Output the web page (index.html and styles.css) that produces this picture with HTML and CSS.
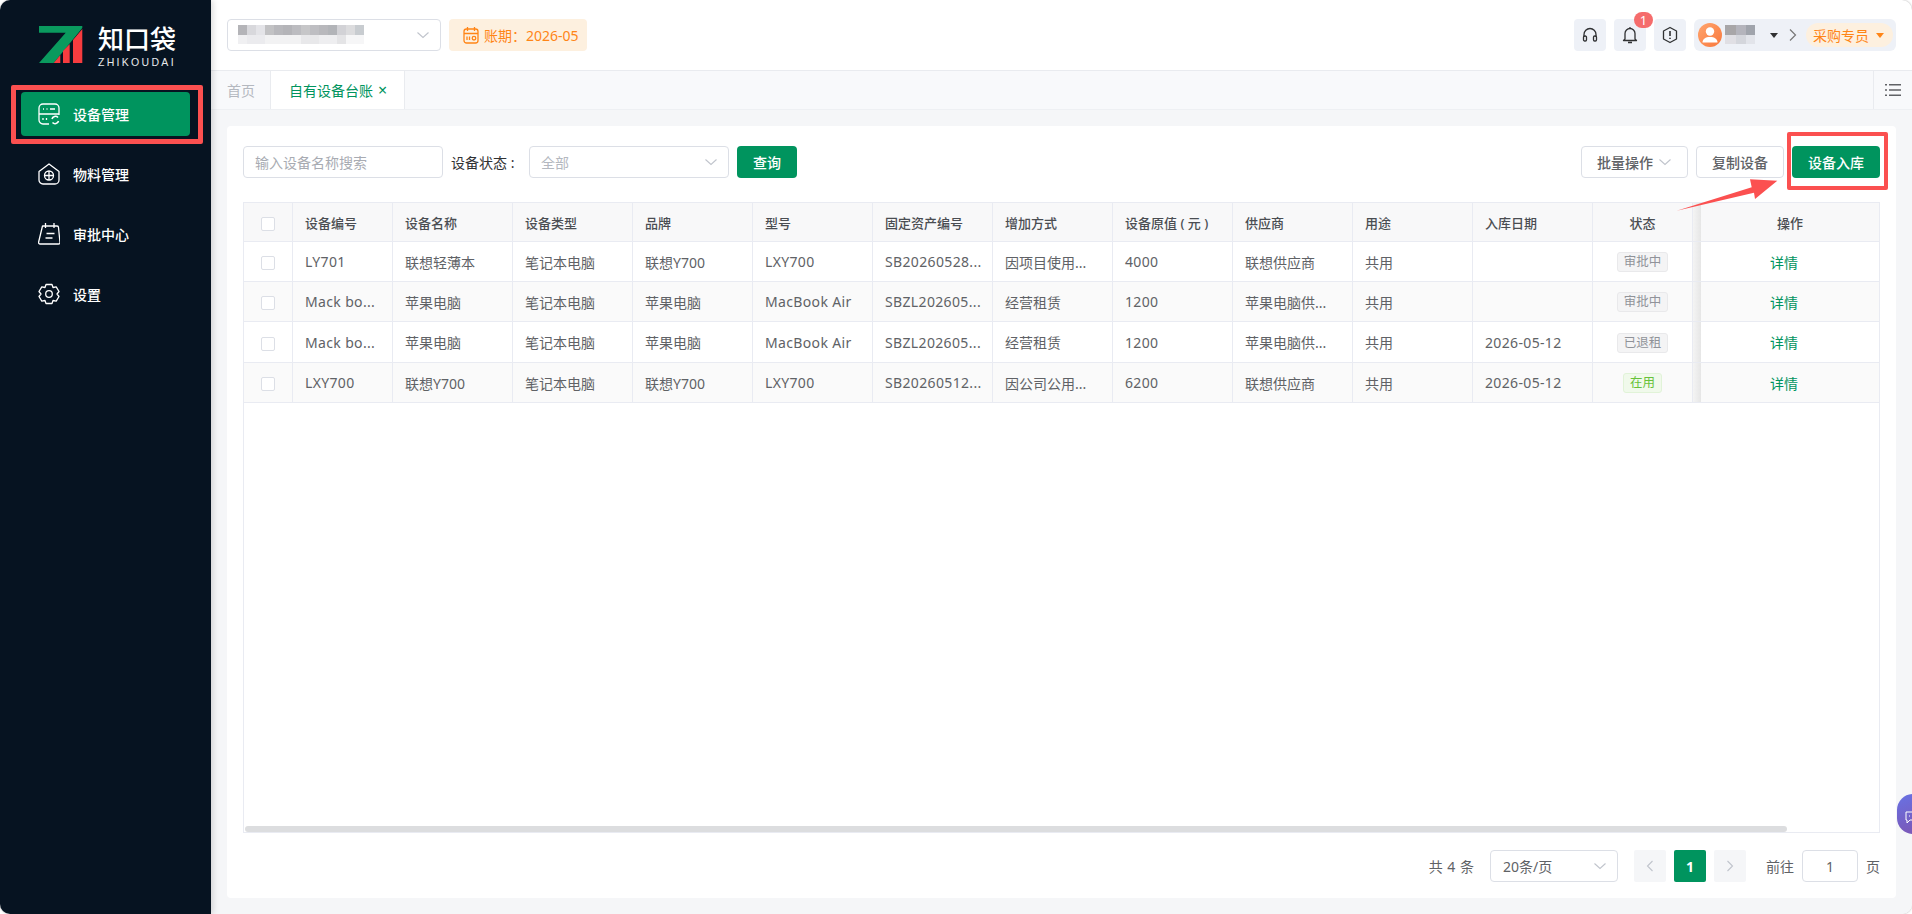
FILE: index.html
```html
<!DOCTYPE html>
<html lang="zh-CN">
<head>
    <meta charset="UTF-8">
    <title>自有设备台账</title>
    <link rel="stylesheet" href="styles.css">
</head>
<body>
<svg class="defs" width="0" height="0">
    <symbol id="chev" viewBox="0 0 14 14"><path d="M1.5 4.5 7 9.5l5.5-5" fill="none" stroke="currentColor" stroke-width="1.1"/></symbol>
</svg>
<div class="app">
    <aside class="sidebar">
        <div class="logo">
            <svg class="logo-mark" viewBox="0 0 44 38">
                <path d="M0 0H43.300V2L14.700 37H0L26.700 6.700H0z" fill="#0a9a5e"/>
                <path d="M14.700 37 21.300 29V37zM24 37V25L30.700 18V37zM34 37V14L43.300 3V37z" fill="#f63c3f"/>
            </svg>
            <div class="logo-text">
                <div class="logo-cn">知口袋</div>
                <div class="logo-en">ZHIKOUDAI</div>
            </div>
        </div>
        <nav class="menu">
            <a class="menu-item active">
                <svg class="menu-icon" viewBox="0 0 22 22" fill="none" stroke="#fff" stroke-width="1.3">
                    <path d="M11 21H5a4 4 0 0 1-4-4V5a4 4 0 0 1 4-4h12a4 4 0 0 1 4 4v7"/>
                    <path d="M1 11h20M5 6h1M8.500 6h1M12 6h5M5 15v2M8.500 15v2"/>
                    <path d="M14 16a3.500 3.500 0 0 1 6-1.500M20.500 18a3.500 3.500 0 0 1-6 1.500" stroke-width="1.600"/>
                </svg>
                <span>设备管理</span>
            </a>
            <a class="menu-item">
                <svg class="menu-icon" viewBox="0 0 22 22" fill="none" stroke="#fff" stroke-width="1.300">
                    <path d="M1 8.500 11 1l10 7.500V17a4 4 0 0 1-4 4H5a4 4 0 0 1-4-4z" stroke-linejoin="round"/>
                    <circle cx="11" cy="12.500" r="4.500"/>
                    <path d="M6.500 12.500h9M11 8v9"/>
                </svg>
                <span>物料管理</span>
            </a>
            <a class="menu-item">
                <svg class="menu-icon" viewBox="0 0 22 22" fill="none" stroke="#fff" stroke-width="1.300">
                    <path d="M4.500 3H19a1.500 1.500 0 0 1 1.500 1.500L22 19.500A1.500 1.500 0 0 1 20.500 21H2a1.500 1.500 0 0 1-1.500-1.500z" stroke-linejoin="round"/>
                    <path d="M7.500 0v5M16 0v5M8.500 10.500h8M7.500 15h7"/>
                </svg>
                <span>审批中心</span>
            </a>
            <a class="menu-item">
                <svg class="menu-icon" viewBox="0 0 22 22" fill="none" stroke="#fff" stroke-width="1.300">
                    <path d="M8 1.500h6l1 3 3.200-.7L21 8.500 19 11l2 2.500-2.800 4.700-3.200-.7-1 3H8l-1-3-3.200.7L1 13.500 3 11 1 8.500l2.800-4.700 3.200.7z" stroke-linejoin="round"/>
                    <circle cx="11" cy="11" r="3.300"/>
                </svg>
                <span>设置</span>
            </a>
        </nav>
    </aside>

    <main class="main">
        <header class="topbar">
            <div class="org-select">
                <svg class="mosaic" width="128" height="20" viewBox="0 0 128 20">
                    <g>
                        <rect width="9" height="10" fill="#b4b4b8"/><rect x="9" width="9" height="10" fill="#d8d8dc"/><rect x="18" width="9" height="10" fill="#e4e4e8"/>
                        <rect x="27" width="9" height="10" fill="#c2c2c4"/><rect x="36" width="9" height="10" fill="#b8b8bc"/><rect x="45" width="9" height="10" fill="#b4b4b8"/>
                        <rect x="54" width="9" height="10" fill="#bcbcc0"/><rect x="63" width="9" height="10" fill="#c6c6c8"/><rect x="72" width="9" height="10" fill="#bebec2"/>
                        <rect x="81" width="9" height="10" fill="#b8b8bc"/><rect x="90" width="9" height="10" fill="#b2b4b8"/><rect x="99" width="9" height="10" fill="#d2d2d6"/>
                        <rect x="108" width="9" height="10" fill="#dcdcde"/><rect x="117" width="9" height="10" fill="#c8ccd0"/>
                    </g>
                    <g>
                        <rect y="10" width="9" height="9" fill="#f0f0f2"/><rect x="9" y="10" width="18" height="9" fill="#ebebee"/><rect x="27" y="10" width="36" height="9" fill="#f2f2f3"/>
                        <rect x="63" y="10" width="18" height="9" fill="#e8e8ea"/><rect x="81" y="10" width="18" height="9" fill="#eeeef0"/><rect x="99" y="10" width="9" height="9" fill="#e4e4e6"/>
                        <rect x="108" y="10" width="18" height="9" fill="#f6f6f7"/>
                    </g>
                </svg>
                <svg class="chev"><use href="#chev"/></svg>
            </div>
            <div class="period">
                <svg width="18" height="18" viewBox="0 0 18 18" fill="none" stroke="currentColor" stroke-width="1.300">
                    <rect x="2" y="3" width="14" height="14" rx="2.500"/>
                    <path d="M2 7.500h14M5.500 1v4M12.500 1v4M5 10.500v3.500M7.500 10.500v3.500"/>
                    <circle cx="12" cy="12.200" r="1.800"/>
                </svg>
                <span>账期：2026-05</span>
            </div>
            <div class="topbar-right">
                <div class="square-btn">
                    <svg width="16" height="16" viewBox="0 0 16 16" fill="none" stroke="#303133" stroke-width="1.300">
                        <path d="M2 10V7.500a6 6 0 0 1 12 0V10"/>
                        <rect x="1.500" y="9" width="3" height="5" rx="1.200"/><rect x="11.500" y="9" width="3" height="5" rx="1.200"/>
                    </svg>
                </div>
                <div class="square-btn">
                    <svg width="16" height="18" viewBox="0 0 16 18" fill="none" stroke="#303133" stroke-width="1.300">
                        <path d="M3 13V7.500a5 5 0 0 1 10 0V13l1.500 1.500h-13zM6 16.500h4M8 1v1.500" stroke-linejoin="round"/>
                    </svg>
                    <span class="dot">1</span>
                </div>
                <div class="square-btn">
                    <svg width="18" height="18" viewBox="0 0 18 18" fill="none" stroke="#303133" stroke-width="1.300">
                        <path d="M9 1.500 15.500 5v8L9 16.500 2.500 13V5z" stroke-linejoin="round"/>
                        <path d="M9 5v5M9 11.700v1.300" stroke-width="1.600"/>
                    </svg>
                </div>
                <div class="user-box">
                    <span class="avatar">
                        <svg width="24" height="24" viewBox="0 0 24 24" fill="#fff">
                            <circle cx="12" cy="8.500" r="4.200"/>
                            <path d="M4.500 19.500c0-3.500 3-5.500 7.500-5.500s7.500 2 7.500 5.500z"/>
                        </svg>
                    </span>
                    <svg class="user-mosaic" width="30" height="20" viewBox="0 0 30 20">
                        <rect width="11" height="10" fill="#a8a6a8"/><rect x="11" width="10" height="10" fill="#b4b4bc"/><rect x="21" width="9" height="10" fill="#a0a4ac"/>
                        <rect y="10" width="11" height="9" fill="#e0dfe4"/><rect x="11" y="10" width="10" height="9" fill="#d4d6dc"/><rect x="21" y="10" width="9" height="9" fill="#e2e4ea"/>
                    </svg>
                    <span class="caret dark"></span>
                    <svg class="user-arrow" width="8" height="14" viewBox="0 0 8 14"><path d="M1 1.500 6.500 7 1 12.500" fill="none" stroke="#777" stroke-width="1.200"/></svg>
                    <span class="role">采购专员<span class="caret orange"></span></span>
                </div>
            </div>
        </header>

        <div class="tabs">
            <div class="tab">首页</div>
            <div class="tab on">自有设备台账<span class="tab-x">×</span></div>
            <div class="tabs-more">
                <svg width="16" height="14" viewBox="0 0 16 14" fill="#606266">
                    <path d="M0 1h2v1.500H0zM4 1h12v1.500H4zM0 6.200h2v1.500H0zM4 6.200h12v1.500H4zM0 11.500h2V13H0zM4 11.500h12V13H4z"/>
                </svg>
            </div>
        </div>

        <div class="content">
            <section class="card">
                <div class="toolbar">
                    <div class="field name-input">输入设备名称搜索</div>
                    <label class="status-label">设备状态 :</label>
                    <div class="field status-select">全部<svg class="chev"><use href="#chev"/></svg></div>
                    <button class="btn primary query">查询</button>
                    <div class="toolbar-right">
                        <button class="btn batch">批量操作<svg class="chev"><use href="#chev"/></svg></button>
                        <button class="btn copy">复制设备</button>
                        <button class="btn primary add">设备入库</button>
                    </div>
                </div>

                <div class="table-wrap">
                    <table class="tbl">
                        <colgroup>
                            <col class="c-check"><col class="c-no"><col span="10" class="c-std"><col class="c-status"><col class="c-op">
                        </colgroup>
                        <thead>
                            <tr>
                                <th><span class="check"></span></th>
                                <th>设备编号</th><th>设备名称</th><th>设备类型</th><th>品牌</th><th>型号</th>
                                <th>固定资产编号</th><th>增加方式</th><th>设备原值 ( 元 )</th><th>供应商</th><th>用途</th><th>入库日期</th>
                                <th class="mid">状态</th><th class="fix mid">操作</th>
                            </tr>
                        </thead>
                        <tbody>
                            <tr>
                                <td><span class="check"></span></td>
                                <td class="en">LY701</td><td>联想轻薄本</td><td>笔记本电脑</td><td>联想Y700</td><td class="en">LXY700</td>
                                <td class="en">SB20260528...</td><td>因项目使用...</td><td class="en">4000</td><td>联想供应商</td><td>共用</td><td></td>
                                <td class="mid"><span class="tag">审批中</span></td><td class="fix link">详情</td>
                            </tr>
                            <tr>
                                <td><span class="check"></span></td>
                                <td class="en">Mack bo...</td><td>苹果电脑</td><td>笔记本电脑</td><td>苹果电脑</td><td class="en">MacBook Air</td>
                                <td class="en">SBZL202605...</td><td>经营租赁</td><td class="en">1200</td><td>苹果电脑供...</td><td>共用</td><td></td>
                                <td class="mid"><span class="tag">审批中</span></td><td class="fix link">详情</td>
                            </tr>
                            <tr class="tall">
                                <td><span class="check"></span></td>
                                <td class="en">Mack bo...</td><td>苹果电脑</td><td>笔记本电脑</td><td>苹果电脑</td><td class="en">MacBook Air</td>
                                <td class="en">SBZL202605...</td><td>经营租赁</td><td class="en">1200</td><td>苹果电脑供...</td><td>共用</td><td class="en">2026-05-12</td>
                                <td class="mid"><span class="tag">已退租</span></td><td class="fix link">详情</td>
                            </tr>
                            <tr>
                                <td><span class="check"></span></td>
                                <td class="en">LXY700</td><td>联想Y700</td><td>笔记本电脑</td><td>联想Y700</td><td class="en">LXY700</td>
                                <td class="en">SB20260512...</td><td>因公司公用...</td><td class="en">6200</td><td>联想供应商</td><td>共用</td><td class="en">2026-05-12</td>
                                <td class="mid"><span class="tag green">在用</span></td><td class="fix link">详情</td>
                            </tr>
                        </tbody>
                    </table>
                    <div class="scroll-thumb"></div>
                </div>

                <div class="pager">
                    <span class="total">共 4 条</span>
                    <div class="field size-select">20条/页<svg class="chev"><use href="#chev"/></svg></div>
                    <button class="page-btn">
                        <svg width="8" height="12" viewBox="0 0 8 12"><path d="M6.500 1 1.500 6l5 5" fill="none" stroke="#c0c4cc" stroke-width="1.100"/></svg>
                    </button>
                    <button class="page-btn current">1</button>
                    <button class="page-btn">
                        <svg width="8" height="12" viewBox="0 0 8 12"><path d="M1.500 1l5 5-5 5" fill="none" stroke="#c0c4cc" stroke-width="1.100"/></svg>
                    </button>
                    <span class="goto">前往</span>
                    <div class="field goto-input">1</div>
                    <span class="goto-unit">页</span>
                </div>
            </section>
        </div>
    </main>

    <!-- 标注 -->
    <div class="mark mark-menu"></div>
    <div class="mark mark-add"></div>
    <svg class="arrow" width="104" height="34" viewBox="0 0 104 34">
        <path d="M1.700 32.700 76.700 9.300 75 1.300 102.300 2.700 80 21 79 14.700z" fill="#fb5050"/>
    </svg>
    <div class="chat-bubble">
        <svg width="14" height="14" viewBox="0 0 14 14" fill="none" stroke="#fff" stroke-width="1"><path d="M1 2h12v8H5l-3 3v-3H1z"/><path d="M4 6h1M7 6h1M10 6h1"/></svg>
    </div>
</div>
</body>
</html>
```

FILE: styles.css
```css
* {
    box-sizing: border-box;
}
html, body {
    margin: 0;
    height: 100%;
    background: #fff;
}
body {
    font-family: "Noto Sans", "Noto Sans CJK SC", sans-serif;
    font-size: 14px;
    color: #606266;
    overflow: hidden;
}
.defs {
    position: absolute;
}
.app {
    position: relative;
    display: flex;
    width: 1912px;
    height: 914px;
    border-radius: 10px;
    overflow: hidden;
    box-shadow: 0 0 2px rgba(0, 0, 0, .35);
}

/* 左侧菜单 */
.sidebar {
    width: 211px;
    flex: none;
    background: #061321;
    box-shadow: 2px 0 6px rgba(0, 0, 0, .15);
    z-index: 2;
}
.logo {
    display: flex;
    padding: 26px 0 0 39px;
    height: 92px;
}
.logo-mark {
    width: 44px;
    height: 38px;
}
.logo-text {
    margin-left: 15px;
    color: #fff;
}
.logo-cn {
    font-size: 26px;
    font-weight: 500;
    line-height: 26px;
}
.logo-en {
    font-family: "Liberation Sans", sans-serif;
    font-size: 10.5px;
    line-height: 12px;
    margin-top: 4px;
    letter-spacing: 2.3px;
    color: #e8eaec;
}
.menu {
    padding: 0 21px;
}
.menu-item {
    display: flex;
    align-items: center;
    height: 44px;
    margin-bottom: 16px;
    padding-left: 17px;
    border-radius: 4px;
    color: #fff;
    font-weight: 500;
}
.menu-item.active {
    background: #00945e;
}
.menu-icon {
    width: 22px;
    height: 22px;
    margin-right: 13px;
    flex: none;
}

.main {
    flex: 1;
    min-width: 0;
    display: flex;
    flex-direction: column;
}

/* 顶栏 */
.topbar {
    display: flex;
    align-items: center;
    height: 71px;
    padding: 0 16px;
    border-bottom: 1px solid #e9ebef;
}
.org-select {
    display: flex;
    align-items: center;
    justify-content: space-between;
    width: 214px;
    height: 32px;
    padding: 0 10px 0 10px;
    border: 1px solid #dcdfe6;
    border-radius: 4px;
}
.chev {
    width: 14px;
    height: 14px;
    color: #c0c4cc;
    flex: none;
}
.period {
    display: flex;
    align-items: center;
    gap: 4px;
    width: 138px;
    height: 32px;
    margin-left: 8px;
    padding-left: 13px;
    border-radius: 4px;
    background: #fdf0df;
    color: #ff8516;
}
.topbar-right {
    display: flex;
    align-items: center;
    gap: 8px;
    margin-left: auto;
}
.square-btn {
    position: relative;
    display: flex;
    align-items: center;
    justify-content: center;
    width: 32px;
    height: 32px;
    border-radius: 4px;
    background: #eef1f7;
}
.dot {
    position: absolute;
    top: -7px;
    right: -7px;
    width: 19px;
    height: 16px;
    border-radius: 8px;
    background: #f56c6c;
    color: #fff;
    font-size: 13px;
    line-height: 16px;
    text-align: center;
}
.user-box {
    display: flex;
    align-items: center;
    width: 202px;
    height: 32px;
    padding-left: 4px;
    border-radius: 6px;
    background: #eef1f7;
}
.avatar {
    display: flex;
    width: 24px;
    height: 24px;
    border-radius: 50%;
    background: linear-gradient(135deg, #ffa56e, #f9783c);
}
.user-mosaic {
    margin-left: 3px;
}
.caret {
    display: inline-block;
    width: 0;
    height: 0;
    border-left: 4px solid transparent;
    border-right: 4px solid transparent;
    border-top: 5px solid #303133;
}
.caret.dark {
    margin-left: 15px;
}
.caret.orange {
    margin-left: 7px;
    border-top-color: #ff8516;
}
.user-arrow {
    margin-left: 11px;
}
.role {
    display: flex;
    align-items: center;
    width: 87px;
    height: 24px;
    margin-left: 9px;
    padding-left: 7px;
    border-radius: 12px;
    background: #fdf0df;
    color: #ff8516;
}

/* 页签 */
.tabs {
    display: flex;
    height: 39px;
    background: #f8f9fb;
    border-bottom: 1px solid #eef0f3;
}
.tab {
    display: flex;
    align-items: center;
    width: 60px;
    padding: 0 0 0 16px;
    color: #b4b8bf;
    border-right: 1px solid #e9ebef;
    white-space: nowrap;
}
.tab.on {
    width: 134px;
    padding: 0 0 0 18px;
    background: #fff;
    color: #00945e;
}
.tab-x {
    margin-left: 5px;
    font-size: 16px;
}
.tabs-more {
    display: flex;
    align-items: center;
    justify-content: center;
    width: 39px;
    margin-left: auto;
    border-left: 1px solid #e9ebef;
}

/* 内容 */
.content {
    flex: 1;
    min-height: 0;
    padding: 16px;
    background: #f5f6f8;
}
.card {
    display: flex;
    flex-direction: column;
    height: 100%;
    padding: 20px 16px 16px;
    border-radius: 4px;
    background: #fff;
}
.toolbar {
    display: flex;
    align-items: center;
    height: 32px;
}
.field {
    display: flex;
    align-items: center;
    height: 32px;
    border: 1px solid #dcdfe6;
    border-radius: 4px;
    background: #fff;
}
.name-input {
    width: 200px;
    padding-left: 11px;
    color: #a8abb2;
}
.status-label {
    margin-left: 8px;
    width: 78px;
    color: #303133;
}
.status-select {
    justify-content: space-between;
    width: 200px;
    padding: 0 10px 0 11px;
    color: #b4b8bf;
}
.btn {
    height: 32px;
    border: 1px solid #dcdfe6;
    border-radius: 4px;
    background: #fff;
    color: #606266;
    font: inherit;
    font-weight: 500;
    padding: 0;
}
.btn.primary {
    border: 0;
    background: #00945e;
    color: #fff;
}
.query {
    width: 60px;
    margin-left: 8px;
}
.toolbar-right {
    display: flex;
    gap: 8px;
    margin-left: auto;
}
.batch {
    display: flex;
    align-items: center;
    justify-content: center;
    gap: 5px;
    width: 107px;
}
.copy,
.add {
    width: 88px;
}

/* 表格 */
.table-wrap {
    position: relative;
    flex: 1;
    min-height: 0;
    margin-top: 24px;
    border: 1px solid #e9ebf2;
    overflow: hidden;
}
.tbl {
    width: 1635px;
    table-layout: fixed;
    border-collapse: separate;
    border-spacing: 0;
}
.c-check { width: 49px; }
.c-no { width: 100px; }
.c-std { width: 120px; }
.c-status { width: 100px; }
.c-op { width: 186px; }
.tbl th,
.tbl td {
    padding: 0 12px;
    border-right: 1px solid #e9ebf2;
    border-bottom: 1px solid #e9ebf2;
    text-align: left;
    white-space: nowrap;
    overflow: hidden;
}
.tbl th {
    height: 39px;
    background: #f8f8f9;
    color: #4a4d52;
    font-size: 13px;
    font-weight: 500;
}
.tbl td {
    height: 40px;
}
.tbl td.en {
    letter-spacing: .35px;
}
.tbl tr.tall td {
    height: 41px;
}
.tbl tbody tr:nth-child(even) td {
    background-color: #fafafa;
}
.tbl th:first-child,
.tbl td:first-child {
    padding: 0;
    text-align: center;
}
.tbl .mid {
    text-align: center;
    padding: 0;
}
.tbl .fix,
.tbl tbody tr:nth-child(even) td.fix {
    border-right: 0;
    padding-left: 8px;
    background-image: linear-gradient(to right, #f4f4f4, #e6e6e6);
    background-size: 8px 100%;
    background-repeat: no-repeat;
}
.tbl .link {
    color: #00945e;
    text-align: center;
    padding-right: 12px;
}
.check {
    display: inline-block;
    width: 14px;
    height: 14px;
    border: 1px solid #dcdfe6;
    border-radius: 2px;
    background: #fff;
    vertical-align: middle;
}
.tag {
    display: inline-block;
    height: 20px;
    padding: 0 6px;
    border: 1px solid #e9e9eb;
    border-radius: 3px;
    background: #f4f4f5;
    color: #909399;
    font-size: 12.5px;
    line-height: 18px;
    vertical-align: middle;
}
.tag.green {
    background: #f0f9eb;
    border-color: #e1f3d8;
    color: #67c23a;
}
.scroll-thumb {
    position: absolute;
    left: 1px;
    right: 92px;
    bottom: 0;
    height: 6px;
    border-radius: 3px;
    background: #dcdddf;
}

/* 分页 */
.pager {
    display: flex;
    align-items: center;
    justify-content: flex-end;
    height: 32px;
    margin-top: 17px;
}
.total {
    margin-right: 16px;
    word-spacing: 1px;
}
.size-select {
    justify-content: space-between;
    width: 128px;
    padding: 0 10px 0 12px;
    margin-right: 16px;
}
.page-btn {
    display: flex;
    align-items: center;
    justify-content: center;
    width: 32px;
    height: 32px;
    margin-right: 8px;
    padding: 0;
    border: 0;
    border-radius: 2px;
    background: #f5f6f8;
    font: inherit;
}
.page-btn.current {
    background: #00945e;
    color: #fff;
    font-weight: 700;
}
.goto {
    margin-left: 12px;
}
.goto-input {
    justify-content: center;
    width: 56px;
    margin: 0 8px;
}

/* 标注 */
.mark {
    position: absolute;
    border: 4px solid #fb5050;
    border-radius: 2px;
}
.mark-menu {
    left: 11px;
    top: 85px;
    width: 192px;
    height: 59px;
    z-index: 3;
    border-width: 5px;
}
.mark-add {
    left: 1787px;
    top: 132px;
    width: 101px;
    height: 58px;
}
.arrow {
    position: absolute;
    left: 1675px;
    top: 178px;
}
.chat-bubble {
    position: absolute;
    left: 1897px;
    top: 794px;
    width: 24px;
    height: 40px;
    padding: 15px 0 0 8px;
    border-radius: 16px 0 0 16px;
    background: linear-gradient(160deg, #6872e4, #7c56b4);
}
```
